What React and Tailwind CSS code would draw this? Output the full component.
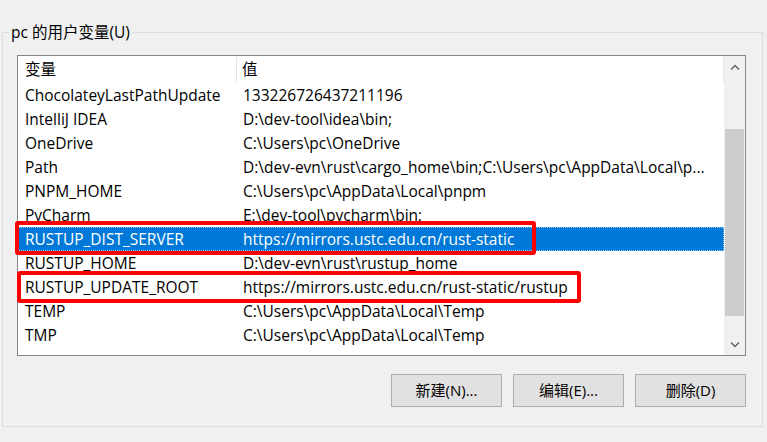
import React from "react";

const rows = [
  ["ChocolateyLastPathUpdate", "133226726437211196"],
  ["IntelliJ IDEA", "D:\\dev-tool\\idea\\bin;"],
  ["OneDrive", "C:\\Users\\pc\\OneDrive"],
  ["Path", "D:\\dev-evn\\rust\\cargo_home\\bin;C:\\Users\\pc\\AppData\\Local\\p..."],
  ["PNPM_HOME", "C:\\Users\\pc\\AppData\\Local\\pnpm"],
  ["PyCharm", "E:\\dev-tool\\pycharm\\bin;"],
  ["RUSTUP_DIST_SERVER", "https://mirrors.ustc.edu.cn/rust-static"],
  ["RUSTUP_HOME", "D:\\dev-evn\\rust\\rustup_home"],
  ["RUSTUP_UPDATE_ROOT", "https://mirrors.ustc.edu.cn/rust-static/rustup"],
  ["TEMP", "C:\\Users\\pc\\AppData\\Local\\Temp"],
  ["TMP", "C:\\Users\\pc\\AppData\\Local\\Temp"],
  ["windir", "C:\\Windows\\System32\\Wbem;C:\\Windows"],
];

const SELECTED = 6;

function Chevron({ up }) {
  return (
    <svg width="10" height="6" viewBox="0 0 10 6" fill="none">
      <path
        d={up ? "M1 5.5 L5 1.5 L9 5.5" : "M1 0.5 L5 4.5 L9 0.5"}
        stroke="#606060"
        strokeWidth="1.4"
      />
    </svg>
  );
}

function WinButton({ children }) {
  return (
    <button className="w-[111px] h-[33px] bg-[#e1e1e1] border border-[#adadad] text-[15px] text-black leading-none">
      {children}
    </button>
  );
}

export default function App() {
  return (
    <div
      className="relative w-[767px] h-[442px] overflow-hidden bg-[#f0f0f0] pt-[22px] text-black"
      style={{ fontFamily: '"Open Sans", "Noto Sans CJK SC", sans-serif' }}
    >
      <fieldset className="ml-[2px] w-[761px] h-[405px] border border-[#dcdcdc] p-0">
        <legend className="ml-[6px] px-[2px] text-[15.5px] leading-[20px]">pc 的用户变量(U)</legend>

        {/* list view */}
        <div className="ml-[14px] mt-[13px] w-[729px] h-[301px] border border-[#828790] bg-white flex">
          <div className="flex-1 flex flex-col overflow-hidden text-[15.5px]">
            <div className="h-[27px] shrink-0 flex items-center">
              <div className="w-[219px] h-[25px] flex items-center pl-[7px] border-r border-[#e5e5e5]">变量</div>
              <div className="flex-1 h-[25px] flex items-center pl-[5px] border-r border-[#e5e5e5]">值</div>
            </div>
            {rows.map(([name, value], i) => (
              <div
                key={name}
                className={`h-[24px] shrink-0 flex items-center whitespace-nowrap ${
                  i === rows.length - 1 ? "pt-[5px]" : "pt-[1px]"
                } ${
                  i === SELECTED ? "bg-[#0078d7] text-white outline-1 outline-dotted outline-offset-[-1px] outline-[#99c9ef]" : ""
                }`}
              >
                <div className="w-[219px] pl-[7px]">{name}</div>
                <div className="flex-1 pl-[6px]">{value}</div>
              </div>
            ))}
          </div>

          {/* scrollbar */}
          <div className="w-[21px] shrink-0 bg-[#f0f0f0] flex flex-col">
            <div className="h-[21px] flex items-center justify-center">
              <Chevron up />
            </div>
            <div className="flex-1 px-[1px] pt-[52px] pb-[18px]">
              <div className="h-full bg-[#cdcdcd]" />
            </div>
            <div className="h-[21px] flex items-center justify-center">
              <Chevron />
            </div>
          </div>
        </div>

        <div className="ml-[14px] mt-[18px] w-[729px] flex justify-end gap-[11px]">
          <WinButton>新建(N)...</WinButton>
          <WinButton>编辑(E)...</WinButton>
          <WinButton>删除(D)</WinButton>
        </div>
      </fieldset>

      {/* red annotation boxes */}
      <div className="absolute left-[15px] top-[221px] w-[521px] h-[34px] border-[4px] border-[#ff0000] rounded-[3px]" />
      <div className="absolute left-[17px] top-[271px] w-[564px] h-[32px] border-[4px] border-[#ff0000] rounded-[3px]" />
    </div>
  );
}
